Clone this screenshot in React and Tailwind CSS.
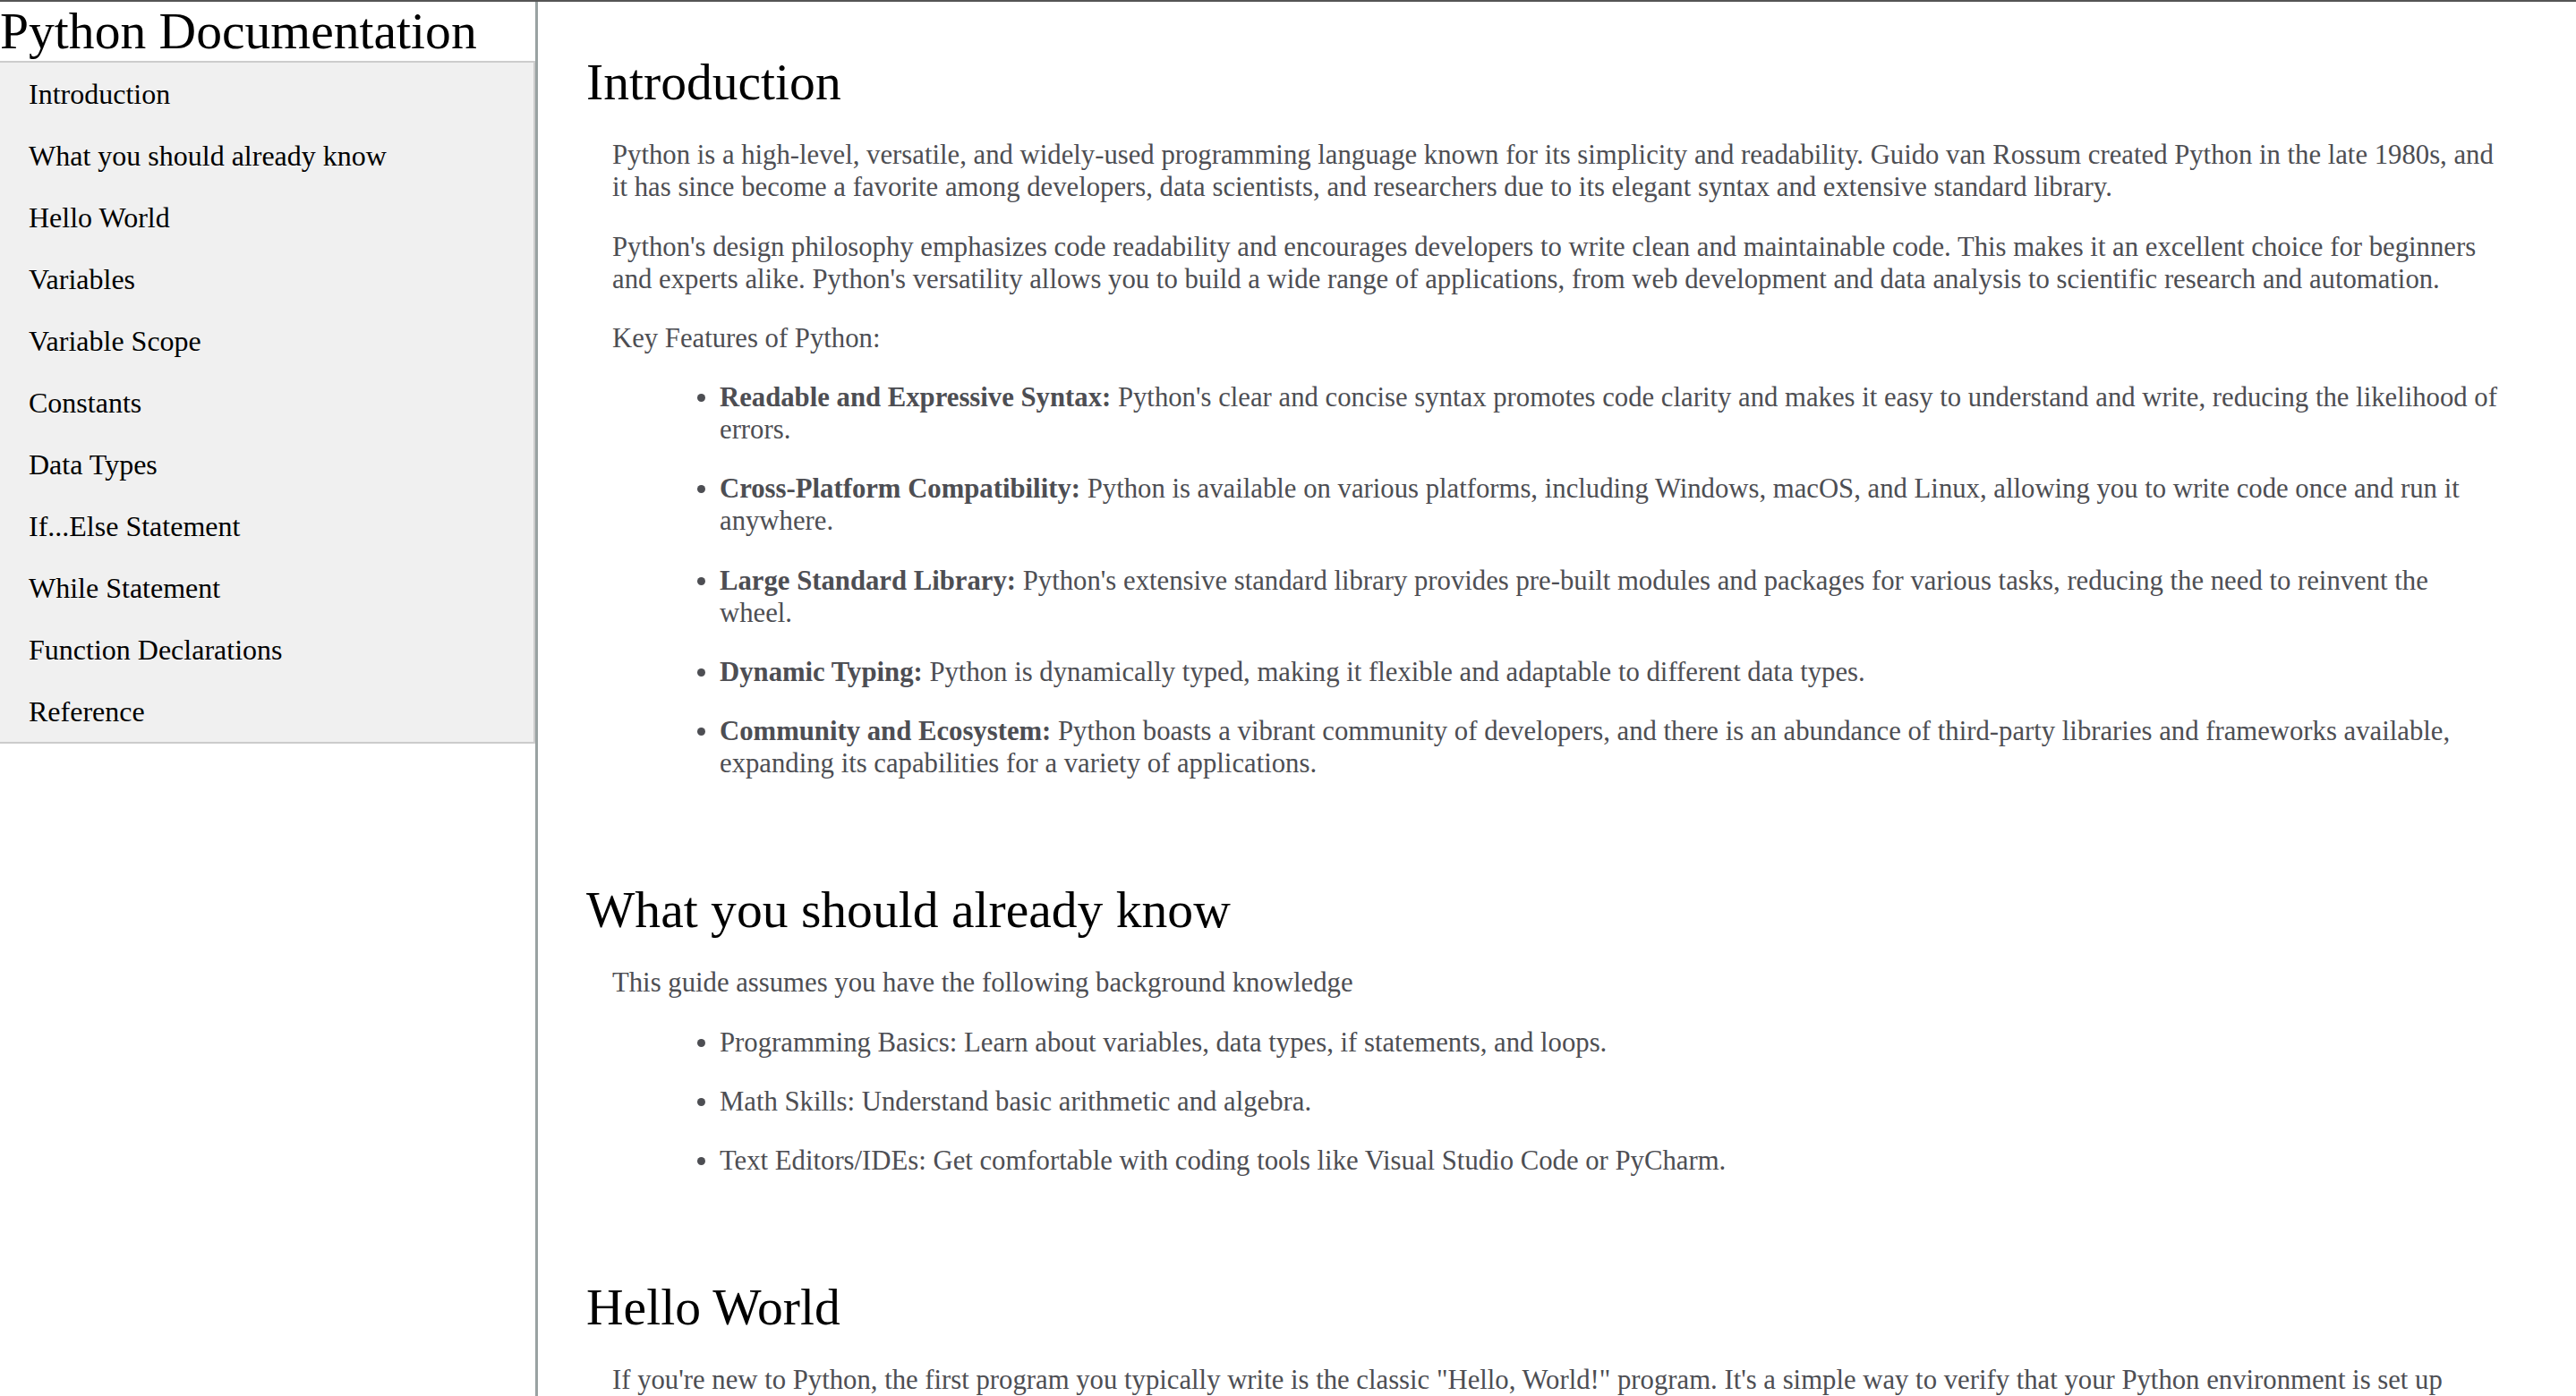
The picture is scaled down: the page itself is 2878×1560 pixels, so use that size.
import React from 'react'

const navItems = [
  'Introduction',
  'What you should already know',
  'Hello World',
  'Variables',
  'Variable Scope',
  'Constants',
  'Data Types',
  'If...Else Statement',
  'While Statement',
  'Function Declarations',
  'Reference',
]

const features = [
  ['Readable and Expressive Syntax:', "Python's clear and concise syntax promotes code clarity and makes it easy to understand and write, reducing the likelihood of errors."],
  ['Cross-Platform Compatibility:', 'Python is available on various platforms, including Windows, macOS, and Linux, allowing you to write code once and run it anywhere.'],
  ['Large Standard Library:', "Python's extensive standard library provides pre-built modules and packages for various tasks, reducing the need to reinvent the wheel."],
  ['Dynamic Typing:', 'Python is dynamically typed, making it flexible and adaptable to different data types.'],
  ['Community and Ecosystem:', 'Python boasts a vibrant community of developers, and there is an abundance of third-party libraries and frameworks available, expanding its capabilities for a variety of applications.'],
]

const basics = [
  'Programming Basics: Learn about variables, data types, if statements, and loops.',
  'Math Skills: Understand basic arithmetic and algebra.',
  'Text Editors/IDEs: Get comfortable with coding tools like Visual Studio Code or PyCharm.',
]

function Section({ title, children, first }) {
  return (
    <section className={first ? '' : 'mt-[113px]'}>
      <h2 className="text-[57.6px] leading-[66px] text-black">{title}</h2>
      <article className="mx-[29px] text-[30.72px] leading-[36px] text-[#4d4e53]">
        {children}
      </article>
    </section>
  )
}

export default function App() {
  return (
    <div className="flex h-screen overflow-hidden border-t-2 border-[#555] bg-white font-['Liberation_Serif',serif]">
      <aside className="w-[601px] shrink-0 border-r-[3px] border-[#99a2a2]">
        <header className="h-[66px] text-[57.6px] leading-[66px] text-black whitespace-nowrap">
          Python Documentation
        </header>
        <ul className="border-y-2 border-r-2 border-[#ccc] bg-[#f0f0f0]">
          {navItems.map(item => (
            <li key={item} className="flex h-[69px] items-center px-[32px] text-[32px] leading-[36px] text-black">
              {item}
            </li>
          ))}
        </ul>
      </aside>

      <main className="min-w-0 flex-1 px-[54px] pt-[57px]">
        <Section title="Introduction" first>
          <p className="mt-[30.25px]">
            Python is a high-level, versatile, and widely-used programming language known for its simplicity and readability. Guido van Rossum created Python in the late 1980s, and it has since become a favorite among developers, data scientists, and researchers due to its elegant syntax and extensive standard library.
          </p>
          <p className="mt-[30.25px]">
            Python's design philosophy emphasizes code readability and encourages developers to write clean and maintainable code. This makes it an excellent choice for beginners and experts alike. Python's versatility allows you to build a wide range of applications, from web development and data analysis to scientific research and automation.
          </p>
          <p className="mt-[30.25px]">Key Features of Python:</p>
          <ul className="list-disc pl-[120px]">
            {features.map(([label, text]) => (
              <li key={label} className="mt-[30.25px]">
                <b>{label}</b> {text}
              </li>
            ))}
          </ul>
        </Section>

        <Section title="What you should already know">
          <p className="mt-[30.25px]">This guide assumes you have the following background knowledge</p>
          <ul className="list-disc pl-[120px]">
            {basics.map(b => (
              <li key={b} className="mt-[30.25px]">{b}</li>
            ))}
          </ul>
        </Section>

        <Section title="Hello World">
          <p className="mt-[30.25px]">
            If you're new to Python, the first program you typically write is the classic "Hello, World!" program. It's a simple way to verify that your Python environment is set up correctly and to get a feel for the basic syntax of the language.
          </p>
        </Section>
      </main>
    </div>
  )
}
